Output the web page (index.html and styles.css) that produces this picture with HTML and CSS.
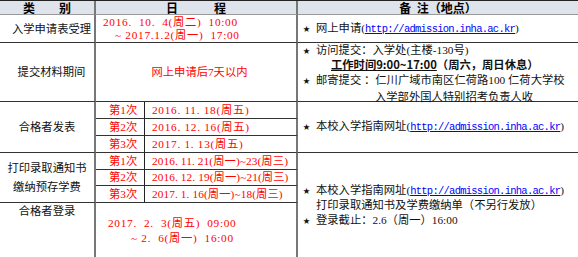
FILE: index.html
```html
<!DOCTYPE html>
<html lang="zh-CN">
<head>
<meta charset="utf-8">
<title>日程</title>
<link rel="stylesheet" href="styles.css">
</head>
<body>
<div class="sched">
  <div class="cell h bl">类　　别</div>
  <div class="cell h bl span2">日　　　程</div>
  <div class="cell h">备&nbsp;&nbsp;注（地点）</div>

  <div class="cell cat bl sh">入学申请表受理</div>
  <div class="cell dates bl span2 r1d">
    <div class="red pre">2016.  10.  4(周二)  10:00</div>
    <div class="red pre in1">~ 2017.1.2(周一)  17:00</div>
  </div>
  <div class="cell note">
    <div><span class="star">★</span>网上申请(<a class="url">http://admission.inha.ac.kr</a>)</div>
  </div>

  <div class="cell cat bl sh">提交材料期间</div>
  <div class="cell dates bl span2 ctr">
    <div class="red">网上申请后7天以内</div>
  </div>
  <div class="cell note top r2n">
    <div class="l1"><span class="star">★</span>访问提交：入学处(主楼-130号)</div>
    <div class="l2 bold"><span class="ul">工作时间9:00~17:00</span>（周六，周日休息）</div>
    <div class="l3"><span class="star">★</span>邮寄提交 ：仁川广域市南区仁荷路100 仁荷大学校</div>
    <div class="l4">入学部外国人特别招考负责人收</div>
  </div>

  <div class="cell cat bl rs3">合格者发表</div>
  <div class="cell sub red">第1次</div>
  <div class="cell sd bl red">2016. 11. 18(周五)</div>
  <div class="cell note rs3">
    <div><span class="star">★</span>本校入学指南网址(<a class="url">http://admission.inha.ac.kr</a>)</div>
  </div>
  <div class="cell sub red">第2次</div>
  <div class="cell sd bl red">2016. 12. 16(周五)</div>
  <div class="cell sub red">第3次</div>
  <div class="cell sd bl red">2017. 1. 13(周五)</div>

  <div class="cell cat bl rs3 two">
    <div>打印录取通知书</div>
    <div>缴纳预存学费</div>
  </div>
  <div class="cell sub red">第1次</div>
  <div class="cell sd long bl red">2016. 11. 21(周一)~23(周三)</div>
  <div class="cell note rs4 top r4n">
    <div class="m1"><span class="star">★</span>本校入学指南网址(<a class="url">http://admission.inha.ac.kr</a>)</div>
    <div class="m2">打印录取通知书及学费缴纳单（不另行发放）</div>
    <div class="m3"><span class="star">★</span>登录截止：2.6（周一）16:00</div>
  </div>
  <div class="cell sub red">第2次</div>
  <div class="cell sd long bl red">2016. 12. 19(周一)~21(周三)</div>
  <div class="cell sub red">第3次</div>
  <div class="cell sd long bl red">2017. 1. 16(周一)~18(周三)</div>

  <div class="cell cat bl top r5c">合格者登录</div>
  <div class="cell dates bl span2 top r5d">
    <div class="red pre">2017.  2.  3(周五)  09:00</div>
    <div class="red pre in2">~ 2.  6(周一)  16:00</div>
  </div>
</div>
</body>
</html>
```
FILE: styles.css
```css
* { box-sizing: border-box; margin: 0; padding: 0; }
html, body { width: 578px; height: 257px; overflow: hidden; background: #fff; }
body {
  font-family: "Liberation Serif", "Noto Sans CJK SC", serif;
  font-size: 11.3px;
  color: #111;
}
.sched {
  display: grid;
  grid-template-columns: 96px 49px 153px 1fr;
  grid-template-rows: 14px 28px 59px 17px 17px 17px 17px 16px 17px 60px;
  border-top: 1px solid #222;
  width: 578px;
}
.cell {
  border-bottom: 1px solid #333;
  display: flex;
  flex-direction: column;
  justify-content: center;
  align-items: flex-start;
  overflow: hidden;
  white-space: nowrap;
  line-height: 15px;
}
.h {
  background: #dfe4ec;
  border-bottom: 1px solid #9a9a9a;
  align-items: center;
  font-weight: bold;
  font-size: 12px;
  line-height: 12px;
  font-family: "Noto Sans CJK SC", sans-serif;
  color: #000;
  overflow: visible;
}
.bl { border-right: 2px solid #777; }
.span2 { grid-column: span 2; }
.rs3 { grid-row: span 3; }
.rs4 { grid-row: span 4; }
.top { justify-content: flex-start; }
.cat { align-items: center; line-height: 16px; }
.cat.sh { padding-left: 9px; }
.cat.two { line-height: 19px; }
.red { color: #f00; }
.pre { white-space: pre; }
.dates .pre, .sd { letter-spacing: 0.7px; }
.sd.long { letter-spacing: 0.1px; }
.dates { padding-left: 7px; }
.r1d { line-height: 13px; }
.in1 { padding-left: 12px; }
.ctr { align-items: center; }
.sub { border-right: 1px solid #222; padding-left: 13px; }
.sd { padding-left: 7px; }
.r5c { line-height: 16px; }
.r5d { padding-top: 13px; padding-left: 12px; }
.in2 { padding-left: 23px; }
.note { padding-left: 5px; }
.star { font-size: 7px; margin-right: 6px; vertical-align: 1px; }
.url {
  font-family: "Liberation Mono", monospace;
  font-size: 10.5px;
  letter-spacing: -0.74px;
  color: #00f;
  text-decoration: underline;
}
.r2n { overflow: visible; }
.r2n .l1 { line-height: 14px; }
.r2n .l2 { line-height: 13px; padding-left: 28px; }
.r2n .l3 { line-height: 16px; margin-top: 1px; }
.r2n .l4 { line-height: 16px; padding-left: 72px; }
.bold { font-weight: bold; font-family: "Noto Sans CJK SC", sans-serif; }
.ul { text-decoration: underline; }
.r4n { padding-top: 30px; }
.r4n .m1 { line-height: 14px; }
.r4n .m2 { line-height: 14px; padding-left: 13px; }
.r4n .m3 { line-height: 17px; }
```
